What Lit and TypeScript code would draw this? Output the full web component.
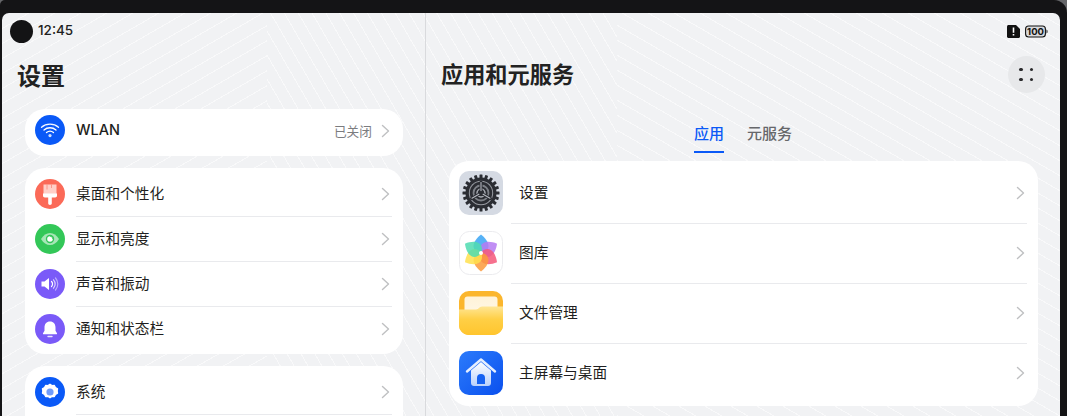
import { LitElement, html, css, svg } from "lit";
import { customElement } from "lit/decorators.js";

const chev = html`<svg class="chev" viewBox="0 0 9 14" width="9" height="14"><path d="M1.5 1.5 7.5 7 1.5 12.5" fill="none" stroke="#bfc0c2" stroke-width="1.4" stroke-linecap="round" stroke-linejoin="round"/></svg>`;

const wifi = svg`<circle cx="15" cy="15" r="15" fill="#0a59f7"/><g fill="none" stroke="#fff" stroke-width="1.3" stroke-linecap="round"><path d="M6.500 12.200C11.200 8 18.800 8 23.500 12.200" opacity=".95"/><path d="M9 15c3.400-3 8.600-3 12 0"/><path d="M11.500 17.600c2-1.700 5-1.700 7 0"/></g><circle cx="15" cy="20.600" r="1.600" fill="#fff" opacity=".8"/>`;
const brush = svg`<circle cx="15" cy="15" r="15" fill="#fb6a58"/><path d="M8.500 5.500h13v9.500h-13z" fill="#ffcfc8"/><path d="M12 5.500v5M16.500 5.500v3.500" stroke="#fb8a7b" stroke-width=".8" fill="none"/><path d="M8 14.500h14v2.300c0 1-.8 1.700-1.800 1.700h-3.400v5.800c0 .9-.8 1.700-1.800 1.700s-1.800-.8-1.800-1.700v-5.800H9.800c-1 0-1.800-.7-1.800-1.700z" fill="#fff"/>`;
const eye = svg`<circle cx="15" cy="15" r="15" fill="#33c758"/><path d="M6 15c2.500-4 5.500-6 9-6s6.500 2 9 6c-2.500 4-5.500 6-9 6s-6.500-2-9-6z" fill="#a6e6b6"/><circle cx="15" cy="15" r="4.200" fill="#33c758"/><circle cx="15" cy="15" r="2.800" fill="#fff"/><path d="M15 12.200a2.800 2.800 0 0 1 2.800 2.800" stroke="#33c758" stroke-width=".8" fill="none"/>`;
const sound = svg`<circle cx="15" cy="15" r="15" fill="#7a5af8"/><path d="M6.500 12.500h3l4.500-3.500v12l-4.500-3.500h-3z" fill="#fff"/><g fill="none" stroke="#fff" stroke-linecap="round" stroke-width="1.200"><path d="M16.500 12.500a3.500 3.500 0 0 1 0 5"/><path d="M18.500 10.800a6.200 6.200 0 0 1 0 8.400" opacity=".75"/><path d="M20.500 9a9 9 0 0 1 0 12" opacity=".5"/></g>`;
const bell = svg`<circle cx="15" cy="15" r="15" fill="#7a5af8"/><path d="M15 7.500c-3.500 0-5.500 2.600-5.500 6v3.300L8 19.300c-.2.500.1 1 .7 1h12.600c.6 0 .9-.5.7-1l-1.500-2.500v-3.300c0-3.400-2-6-5.500-6z" fill="#fff"/><path d="M13 22.500h4" stroke="#fff" stroke-width="1.400" stroke-linecap="round" opacity=".85"/>`;
const gear = svg`<circle cx="15" cy="15" r="15" fill="#0a59f7"/><path d="M15 7.200l2 1.300 2.400-.1 1.100 2.200 2.100 1.200-.4 2.200.4 2.200-2.100 1.200-1.100 2.200-2.400-.1-2 1.300-2-1.300-2.400.1-1.100-2.200-2.100-1.200.4-2.200-.4-2.200 2.100-1.200 1.100-2.200 2.400.1z" fill="#fff" stroke="#fff" stroke-width="1.200" stroke-linejoin="round"/><circle cx="15" cy="15" r="3.600" fill="#6f9cfb"/>`;

const teeth = Array.from({ length: 20 }, (_, i) => svg`<rect x="20.500" y="3.500" width="3" height="4" rx=".5" fill="#2b2d33" transform="rotate(${i * 18} 22 22)"/>`);
const appSettings = svg`<rect width="44" height="44" rx="10" fill="#d5dae3"/>${teeth}
<circle cx="22" cy="22" r="15.500" fill="#2b2d33"/><circle cx="22" cy="22" r="12.200" fill="#9a9da4"/>
<circle cx="22" cy="22" r="11.200" fill="#2b2d33"/>
<circle cx="22" cy="22" r="7.500" fill="none" stroke="#7d8087" stroke-width="1.800"/><circle cx="22" cy="22" r="4" fill="none" stroke="#a9acb3" stroke-width="1.500"/>
<g stroke="#2b2d33" stroke-width="3" stroke-linecap="round"><path d="M22 22V11"/><path d="M22 22 12.500 27.500"/><path d="M22 22 31.500 27.500"/></g>
<g stroke="#b6b9c0" stroke-width="1.100" stroke-linecap="round"><path d="M22 20V11.500"/><path d="M20.300 23 13 27.200"/><path d="M23.700 23 31 27.200"/></g><circle cx="22" cy="22" r="2" fill="#2b2d33"/>`;

const petal = "M22 3.500C26 6.500 29.500 11 29.500 15 29.500 19 26 22 22 22S14.500 19 14.500 15C14.500 11 18 6.500 22 3.500z";
const petals = ["#3aa5f5", "#b57af2", "#f5587a", "#fb9a3c", "#ffe14d", "#4fdcb0"];
const appGallery = svg`<rect x=".5" y=".5" width="43" height="43" rx="10" fill="#fff" stroke="#ebebee"/>
${petals.map((c, i) => svg`<path d=${petal} fill=${c} opacity=".85" transform="rotate(${i * 60} 22 22)"/>`)}
<circle cx="22" cy="22" r="2" fill="#fff"/>`;

const appFiles = svg`<defs><linearGradient id="fg" x1="0" y1="0" x2="0" y2="1"><stop offset="0" stop-color="#ffe695"/><stop offset=".45" stop-color="#ffcf45"/><stop offset="1" stop-color="#ffc52e"/></linearGradient><linearGradient id="fw" x1="0" y1="0" x2="0" y2="1"><stop offset="0" stop-color="#fff3d8"/><stop offset="1" stop-color="#fff8ea"/></linearGradient></defs>
<rect width="44" height="44" rx="10" fill="#fbb62d"/><rect x="5.500" y="5.500" width="33" height="22" rx="3" fill="url(#fw)"/><path d="M0 18.500h17c3 0 3-3 6-3h21V34c0 5.500-4.500 10-10 10H10C4.500 44 0 39.500 0 34z" fill="url(#fg)"/>`;

const appHome = svg`<defs><linearGradient id="hg" x1="0" y1="0" x2="1" y2="1"><stop offset="0" stop-color="#2c7bfb"/><stop offset="1" stop-color="#0a50ee"/></linearGradient><linearGradient id="hw" x1="0" y1="0" x2="0" y2="1"><stop offset="0" stop-color="#fff"/><stop offset="1" stop-color="#b9d0fb"/></linearGradient></defs>
<rect width="44" height="44" rx="10" fill="url(#hg)"/><path d="M12 19.500 22 11l10 8.500V32c0 1.800-1.300 3-3 3H15c-1.700 0-3-1.200-3-3z" fill="url(#hw)"/>
<path d="M18 33v-6a4 4 0 0 1 8 0v6z" fill="#1561f2"/><path d="M8 20.500 22 8.500l14 12" fill="none" stroke="#e6effe" stroke-width="2.400" stroke-linecap="round" stroke-linejoin="round"/>`;

@customElement("app-root")
export class AppRoot extends LitElement {
  static styles = css`
    :host { display: block; width: 1067px; height: 416px; overflow: hidden; background: #66676a; font-family: "Inter", "Noto Sans CJK SC", sans-serif; color: #1c1c1e; }
    .frame { height: 416px; background: #141416; padding: 13px 7px 0 2px; box-sizing: border-box; border-radius: 5px 13px 0 0; }
    .screen { height: 403px; display: grid; grid-template-columns: 424px 1fr; border-radius: 7px 7px 0 0; overflow: hidden;
      background-color: #f1f2f4;
      background-image:
        repeating-linear-gradient(150deg, rgba(255,255,255,.55) 0 1px, transparent 1px 13px),
        repeating-linear-gradient(60deg, rgba(255,255,255,.55) 0 1px, transparent 1px 12px),
        repeating-linear-gradient(30deg, rgba(255,255,255,.55) 0 1px, transparent 1px 13px);
      background-size: 265px 100%, 350px 100%, 443px 100%;
      background-position: 0 0, 265px 0, 615px 0;
      background-repeat: no-repeat; }
    .left { border-right: 1px solid #d9dadd; padding-left: 8px; display: flex; flex-direction: column; min-width: 0; height: 403px; overflow: hidden; }
    .right { display: flex; flex-direction: column; min-width: 0; }
    .status { display: flex; align-items: center; gap: 5px; height: 23px; margin-top: 7px; flex: none; }
    .dot { width: 23px; height: 23px; border-radius: 50%; background: #131315; }
    .time { font: 500 13.500px "Inter", sans-serif; color: #1f1f21; margin-top: -3px; }
    h1 { margin: 0; font: 700 24px/1 "Noto Sans CJK SC", sans-serif; color: #222; }
    .ltitle { padding: 20px 0 0 7px; flex: none; height: 31px; }
    .card { background: #fff; border-radius: 20px; flex: none; }
    .lcards { display: flex; flex-direction: column; gap: 12px; margin: 15px 22px 0 15px; }
    .pad { padding: 3px 0; }
    .row { display: flex; align-items: center; height: 45px; padding: 0 11px 0 10px; }
    .row svg.ic { width: 30px; height: 30px; flex: none; margin-right: 11px; }
    .rl { font: 400 14.700px "Noto Sans CJK SC", sans-serif; color: #1f1f21; flex: 1; align-self: stretch; display: flex; align-items: center; justify-content: space-between; border-top: 1px solid transparent; box-sizing: border-box; }
    .rl > span { margin-bottom: 4px; }
    .sep .rl { border-top-color: #e9eaed; }
    .wlan { height: 41px; margin-bottom: 6px; }
    .rl > span.latin { font: 500 14.500px "Inter", sans-serif; margin-bottom: 2px; }
    .rl > span.val { font: 400 12.700px "Noto Sans CJK SC", sans-serif; color: #7b7c7f; display: flex; align-items: center; gap: 9px; margin-bottom: 0; }
    .val .chev { margin-top: 2px; }
    .chev { flex: none; margin: 0 2px 1px 0; }
    .top-r { height: 23px; margin-top: 7px; display: flex; justify-content: flex-end; align-items: center; gap: 5px; padding-right: 12px; flex: none; }
    .rhead { display: flex; align-items: flex-start; justify-content: space-between; padding: 13px 15px 0 15px; height: 38px; flex: none; }
    .rhead h1 { font-size: 22.200px; margin-top: 6px; }
    .more { width: 37px; height: 37px; border-radius: 50%; background: #e7e8ea; display: grid; grid-template-columns: 4px 4px; gap: 6.500px; place-content: center; }
    .more i { width: 3.500px; height: 3.500px; background: #2a2a2c; border-radius: 50%; }
    .tabs { display: flex; justify-content: center; gap: 23px; margin-top: 26px; height: 33px; flex: none; }
    .tab { font: 500 15px "Noto Sans CJK SC", sans-serif; color: #66676a; line-height: 26px; height: 33px; box-sizing: border-box; }
    .tab.on { color: #0a59f7; border-bottom: 2px solid #0a59f7; }
    .apps { margin: 8px 22px 0 23px; height: 245px; }
    .app { display: flex; align-items: center; height: 60px; padding: 0 11px 0 10px; }
    .app:first-child { height: 62px; padding-top: 2px; box-sizing: border-box; }
    .app svg.ic { width: 44px; height: 44px; flex: none; margin-right: 8px; }
    .app .rl > span { padding-left: 8px; }
  `;

  row(icon: unknown, label: string, sep = true) {
    return html`<div class="row ${sep ? "sep" : ""}"><svg class="ic" viewBox="0 0 30 30">${icon}</svg><div class="rl"><span>${label}</span>${chev}</div></div>`;
  }

  app(icon: unknown, label: string, sep = true) {
    return html`<div class="app ${sep ? "sep" : ""}"><svg class="ic" viewBox="0 0 44 44">${icon}</svg><div class="rl"><span>${label}</span>${chev}</div></div>`;
  }

  render() {
    return html`<div class="frame"><div class="screen">
      <section class="left">
        <div class="status"><div class="dot"></div><span class="time">12:45</span></div>
        <div class="ltitle"><h1>设置</h1></div>
        <div class="lcards">
          <div class="card"><div class="row wlan"><svg class="ic" viewBox="0 0 30 30">${wifi}</svg><div class="rl"><span class="latin">WLAN</span><span class="val">已关闭 ${chev}</span></div></div></div>
          <div class="card pad">
            ${this.row(brush, "桌面和个性化", false)}
            ${this.row(eye, "显示和亮度")}
            ${this.row(sound, "声音和振动")}
            ${this.row(bell, "通知和状态栏")}
          </div>
          <div class="card pad">
            ${this.row(gear, "系统", false)}
            <div class="row sep"><svg class="ic" viewBox="0 0 30 30"></svg><div class="rl"></div></div>
          </div>
        </div>
      </section>
      <section class="right">
        <div class="top-r">
          <svg width="13" height="13" viewBox="0 0 13 13"><path d="M0 1.500C0 .7.700 0 1.500 0H9l4 4v7.500c0 .8-.7 1.500-1.500 1.500h-10C.7 13 0 12.300 0 11.500z" fill="#111"/><path d="M5.700 2.500h1.600v5.300H5.700zM5.700 9h1.600v1.600H5.700z" fill="#fff"/></svg>
          <svg width="23" height="13" viewBox="0 0 23 13"><rect x=".6" y="1" width="19.800" height="11" rx="3" fill="#d9dadd" stroke="#111" stroke-width="1.100"/><path d="M21.500 4.500c.8.300 1 1 1 2s-.2 1.700-1 2z" fill="#111"/><text x="10.500" y="10" text-anchor="middle" font-family="Inter" font-weight="700" font-size="9.500" fill="#111">100</text></svg>
        </div>
        <div class="rhead"><h1>应用和元服务</h1><div class="more"><i></i><i></i><i></i><i></i></div></div>
        <div class="tabs"><div class="tab on">应用</div><div class="tab">元服务</div></div>
        <div class="card apps">
          ${this.app(appSettings, "设置", false)}
          ${this.app(appGallery, "图库")}
          ${this.app(appFiles, "文件管理")}
          ${this.app(appHome, "主屏幕与桌面")}
        </div>
      </section>
    </div></div>`;
  }
}
